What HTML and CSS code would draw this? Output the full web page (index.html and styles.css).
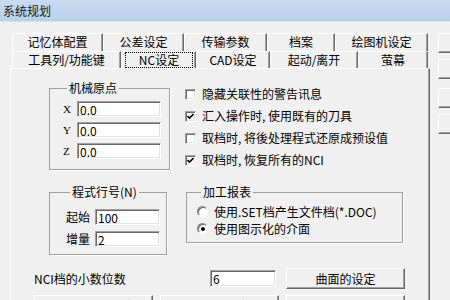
FILE: index.html
```html
<!DOCTYPE html>
<html lang="zh-CN">
<head>
  <meta charset="UTF-8" />
  <title>系统规划</title>
  <link rel="stylesheet" href="styles.css">
</head>
<body>
  <div class="titlebar">系统规划</div>

  <div class="dialog">
    <div class="sheet">
      <div class="tabs tabs-back">
        <div class="tab">记忆体配置</div>
        <div class="tab">公差设定</div>
        <div class="tab">传输参数</div>
        <div class="tab">档案</div>
        <div class="tab">绘图机设定</div>
      </div>
      <div class="tabs tabs-front">
        <div class="tab">工具列/功能键</div>
        <div class="tab active"><span class="focus">NC设定</span></div>
        <div class="tab">CAD设定</div>
        <div class="tab">起动/离开</div>
        <div class="tab">萤幕</div>
      </div>

      <div class="panel">
        <div class="cols">
          <div class="col-left">
            <fieldset class="group group-origin">
              <legend>机械原点</legend>
              <div class="row"><span class="label">X</span><input class="field" type="text" value="0.0"></div>
              <div class="row"><span class="label">Y</span><input class="field" type="text" value="0.0"></div>
              <div class="row"><span class="label">Z</span><input class="field" type="text" value="0.0"></div>
            </fieldset>

            <fieldset class="group group-seq">
              <legend>程式行号(N)</legend>
              <div class="row"><span class="label">起始</span><input class="field" type="text" value="100"></div>
              <div class="row"><span class="label">增量</span><input class="field" type="text" value="2"></div>
            </fieldset>
          </div>

          <div class="col-right">
            <div class="check-row"><span class="check"></span>隐藏关联性的警告讯息</div>
            <div class="check-row">
              <span class="check">
                <svg width="7" height="7" viewBox="0 0 7 7"><path d="M0.5 3 L2.5 5 L6.5 1" fill="none" stroke="#000" stroke-width="1.6"/></svg>
              </span>汇入操作时, 使用既有的刀具
            </div>
            <div class="check-row"><span class="check"></span>取档时, 将後处理程式还原成预设值</div>
            <div class="check-row">
              <span class="check">
                <svg width="7" height="7" viewBox="0 0 7 7"><path d="M0.5 3 L2.5 5 L6.5 1" fill="none" stroke="#000" stroke-width="1.6"/></svg>
              </span>取档时, 恢复所有的NCI
            </div>

            <fieldset class="group group-report">
              <legend>加工报表</legend>
              <div class="radio-row"><span class="radio"></span>使用.SET档产生文件档(*.DOC)</div>
              <div class="radio-row"><span class="radio on"></span>使用图示化的介面</div>
            </fieldset>
          </div>
        </div>

        <div class="nci-row">
          <span class="nci-label">NCI档的小数位数</span>
          <input class="field nci-field" type="text" value="6">
          <div class="btn nci-btn">曲面的设定</div>
        </div>

        <div class="btn-row">
          <div class="btn wide">操作参数的设定</div>
          <div class="btn wide">刀具的设定</div>
          <div class="btn wide">其他的预设值</div>
        </div>
      </div>
    </div>

    <div class="side">
      <div class="btn side-btn">确定</div>
      <div class="btn side-btn">取消</div>
      <div class="btn side-btn sep">套用</div>
      <div class="btn side-btn">说明</div>
    </div>
  </div>
</body>
</html>
```

FILE: styles.css
```css
body {
  margin: 0;
  width: 450px;
  height: 300px;
  overflow: hidden;
  background: #f0f0f0;
  font-family: "Noto Sans CJK SC", sans-serif;
  font-size: 12px;
  line-height: 14px;
  color: #000;
}
.titlebar {
  height: 21px;
  line-height: 21px;
  padding-left: 3px;
  background: linear-gradient(#c8dbf0, #b9cfe9);
  border-bottom: 1px solid #d6e2f0;
  color: #1a1a1a;
}

/* dialog body */
.dialog {
  display: flex;
  align-items: flex-start;
  padding-top: 11px;
}
.sheet {
  flex: none;
  width: 420px;
  margin-left: 10px;
}
.side {
  flex: none;
  display: flex;
  flex-direction: column;
  gap: 6px;
  margin-left: 8px;
}
.side-btn {
  width: 75px;
  height: 20px;
}
.side-btn.sep {
  margin-top: 3px;
}

/* tabs */
.tabs {
  display: grid;
  margin-left: 2px;
  width: 416px;
}
.tabs-back {
  grid-template-columns: 91px 81px 83px 68px 93px;
  height: 18px;
}
.tabs-front {
  grid-template-columns: 109px 75px 74px 88px 70px;
  height: 17px;
}
.tab {
  box-sizing: border-box;
  border-top: 1px solid #fff;
  border-left: 1px solid #fff;
  border-right: 1px solid #696969;
  box-shadow: inset -1px 0 0 #a0a0a0;
  text-align: center;
  line-height: 16px;
}
.tab.active {
  padding: 0 2px 0 3px;
}
.focus {
  display: block;
  height: 16px;
  box-sizing: border-box;
  border: 1px dotted #000;
  line-height: 14px;
}

/* panel */
.panel {
  box-sizing: border-box;
  height: 240px;
  border-top: 1px solid #fff;
  border-left: 1px solid #fff;
  border-right: 1px solid #696969;
  box-shadow: inset -1px 0 0 #a0a0a0;
  padding: 12px 0 0 23px;
}
.cols {
  display: flex;
  align-items: flex-start;
}
.col-left {
  margin-left: 15px;
  width: 121px;
}
.col-right {
  margin-left: 15px;
  padding-top: 2px;
  width: 218px;
}

/* group boxes */
.group {
  margin: 0;
  padding: 0;
  min-width: 0;
  border: 1px solid #a0a0a0;
  box-shadow: 1px 1px 0 #fff;
}
.group legend {
  margin-left: 4px;
  padding: 0 2px;
  line-height: 14px;
}
.group-origin {
  width: 121px;
  box-sizing: border-box;
  padding: 6px 8px 10px 13px;
}
.group-seq {
  width: 118px;
  box-sizing: border-box;
  margin-top: 15px;
  padding: 10px 6px 7px 16px;
}
.group-report {
  width: 217px;
  box-sizing: border-box;
  margin: 14px 0 0 1px;
  padding: 4px 8px 5px 10px;
}

.row {
  display: flex;
  align-items: center;
  height: 16px;
}
.group-origin .row + .row {
  margin-top: 5px;
}
.group-seq .row + .row {
  margin-top: 6px;
}
.group-origin .label {
  width: 14px;
  font-family: "Liberation Serif", serif;
  font-size: 11px;
}
.group-seq .label {
  width: 29px;
}

/* text fields */
.field {
  box-sizing: border-box;
  height: 16px;
  margin: 0;
  padding: 0 2px;
  border: 1px solid;
  border-color: #a0a0a0 #fff #fff #a0a0a0;
  box-shadow: inset 1px 1px 0 #696969, inset -1px -1px 0 #e3e3e3;
  background: #fff;
  font-family: "Noto Sans CJK SC", sans-serif;
  font-size: 12px;
  color: #000;
  outline: none;
}
.group-origin .field {
  width: 84px;
}
.group-seq .field {
  width: 65px;
}

/* checkboxes and radios */
.check-row,
.radio-row {
  display: flex;
  align-items: center;
  white-space: nowrap;
}
.check-row {
  height: 22px;
}
.radio-row {
  height: 17px;
}
.check {
  box-sizing: border-box;
  width: 11px;
  height: 11px;
  margin-right: 6px;
  padding: 1px;
  border: 1px solid;
  border-color: #a0a0a0 #fff #fff #a0a0a0;
  box-shadow: inset 1px 1px 0 #696969, inset -1px -1px 0 #e3e3e3;
  background: #fff;
  display: flex;
  align-items: center;
  justify-content: center;
}
.radio {
  box-sizing: border-box;
  width: 11px;
  height: 11px;
  margin-right: 6px;
  border-radius: 50%;
  border: 1px solid;
  border-color: #808080 #fff #fff #808080;
  box-shadow: inset 1px 1px 0 #696969;
  background: #fff;
  display: flex;
  align-items: center;
  justify-content: center;
}
.radio.on::before {
  content: "";
  width: 4px;
  height: 4px;
  border-radius: 50%;
  background: #000;
}

/* bottom rows */
.nci-row {
  display: flex;
  align-items: center;
  height: 21px;
  margin-top: 13px;
}
.nci-label {
  width: 176px;
}
.nci-field {
  width: 66px;
  height: 17px;
}
.nci-btn {
  width: 119px;
  height: 21px;
  margin-left: 10px;
}
.btn-row {
  display: flex;
  gap: 7px;
  margin-top: 6px;
}
.btn-row .wide {
  width: 119px;
  height: 21px;
}

.btn {
  box-sizing: border-box;
  display: flex;
  align-items: center;
  justify-content: center;
  border: 1px solid;
  border-color: #fff #696969 #696969 #fff;
  box-shadow: inset -1px -1px 0 #a0a0a0;
  background: #f0f0f0;
  white-space: nowrap;
}
```
